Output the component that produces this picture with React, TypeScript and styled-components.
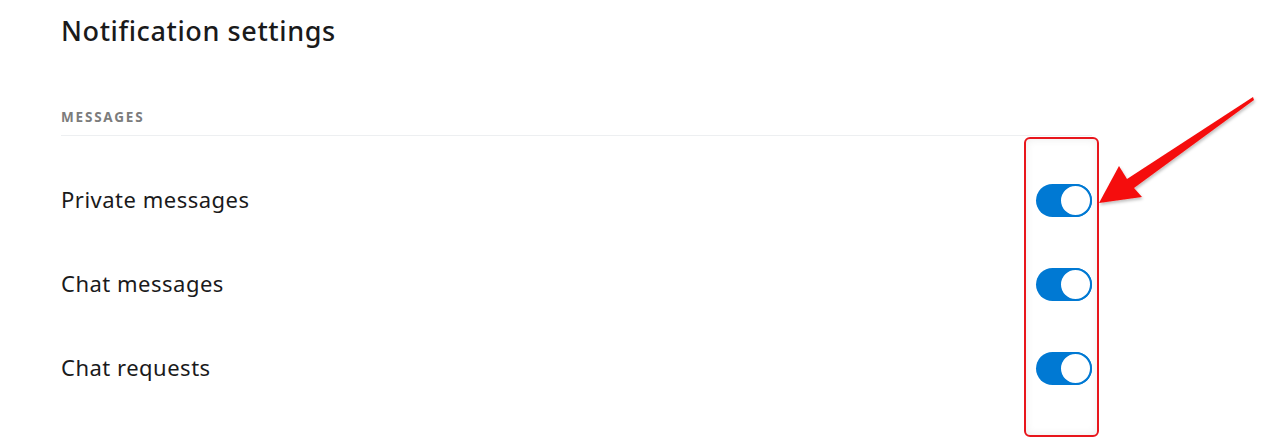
import styled, { createGlobalStyle } from 'styled-components'

const GlobalStyle = createGlobalStyle`
  html, body {
    margin: 0;
    padding: 0;
    background: #ffffff;
  }
  body {
    font-family: 'Noto Sans', 'Open Sans', sans-serif;
    color: #1c1c1c;
  }
`

const Page = styled.div`
  position: relative;
  width: 1261px;
  height: 440px;
  overflow: hidden;
  background: #fff;
`

const Content = styled.div`
  width: 1031px;
  padding: 12px 0 0 61px;
  display: flex;
  flex-direction: column;
`

const Title = styled.h1`
  margin: 0;
  font-size: 27px;
  font-weight: 500;
  letter-spacing: 0.6px;
  line-height: 38px;
  color: #1a1a1b;
`

const SectionHead = styled.div`
  margin-top: 59px;
  padding-bottom: 10px;
  border-bottom: 1px solid #edeff1;
  font-size: 13.5px;
  font-weight: 700;
  letter-spacing: 1.8px;
  line-height: 16px;
  color: #7c7c7c;
  text-transform: uppercase;
`

const List = styled.div`
  display: flex;
  flex-direction: column;
  padding-top: 21px;
`

const Row = styled.div`
  display: flex;
  align-items: center;
  justify-content: space-between;
  height: 84px;
`

const Label = styled.span`
  font-size: 22px;
  font-weight: 400;
  letter-spacing: 0.5px;
  color: #1a1a1b;
`

const Track = styled.button<{ $on: boolean }>`
  position: relative;
  width: 56px;
  height: 33px;
  padding: 0;
  border: none;
  border-radius: 17px;
  background: ${(p) => (p.$on ? '#0079d3' : '#d7dadc')};
  cursor: pointer;
  margin-top: 2px;
`

const Knob = styled.span<{ $on: boolean }>`
  position: absolute;
  top: 0;
  left: ${(p) => (p.$on ? '23px' : '0')};
  width: 33px;
  height: 33px;
  box-sizing: border-box;
  border-radius: 50%;
  background: #fff;
  border: 2px solid #0079d3;
`

const Highlight = styled.div`
  position: absolute;
  left: 1024px;
  top: 137px;
  width: 75px;
  height: 300px;
  box-sizing: border-box;
  border: 2px solid #e8161c;
  border-radius: 6px;
  box-shadow: inset 0 0 8px rgba(0, 0, 0, 0.08);
  pointer-events: none;
`

const Arrow = styled.svg`
  position: absolute;
  left: 0;
  top: 0;
  pointer-events: none;
`

const Toggle = ({ on }: { on: boolean }) => (
  <Track $on={on} aria-pressed={on}>
    <Knob $on={on} />
  </Track>
)

const rows = ['Private messages', 'Chat messages', 'Chat requests']

export default function App() {
  return (
    <Page>
      <GlobalStyle />
      <Content>
        <Title>Notification settings</Title>
        <SectionHead>Messages</SectionHead>
        <List>
          {rows.map((r) => (
            <Row key={r}>
              <Label>{r}</Label>
              <Toggle on />
            </Row>
          ))}
        </List>
      </Content>
      <Highlight />
      <Arrow width="1261" height="440" viewBox="0 0 1261 440">
        <defs>
          <filter id="shadow" x="-10%" y="-10%" width="120%" height="120%">
            <feDropShadow dx="1" dy="2" stdDeviation="1.5" floodColor="#000" floodOpacity="0.25" />
          </filter>
        </defs>
        <polygon
          points="1099,203 1119,166 1127,179 1253,97 1254,100 1134,188 1142,197"
          fill="#f50f0f"
          filter="url(#shadow)"
        />
      </Arrow>
    </Page>
  )
}
